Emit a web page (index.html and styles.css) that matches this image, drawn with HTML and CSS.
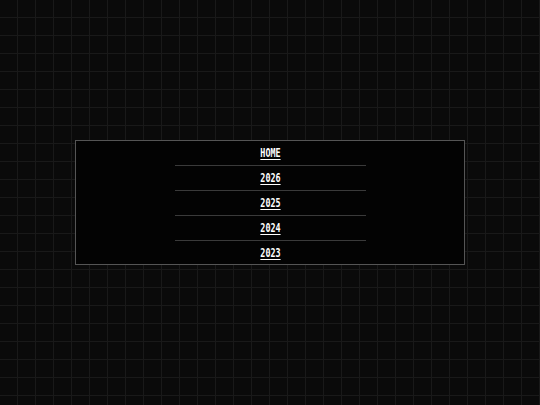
FILE: index.html
```html
<!DOCTYPE html>
<html lang="en">
<head>
<meta charset="utf-8">
<title>Archive</title>
<link rel="stylesheet" href="styles.css">
</head>
<body>
  <main class="stage">
    <nav class="panel">
      <ul class="menu">
        <li class="menu-item"><a class="menu-link" href="#">HOME</a></li>
        <li class="menu-item"><a class="menu-link" href="#">2026</a></li>
        <li class="menu-item"><a class="menu-link" href="#">2025</a></li>
        <li class="menu-item"><a class="menu-link" href="#">2024</a></li>
        <li class="menu-item"><a class="menu-link" href="#">2023</a></li>
      </ul>
    </nav>
  </main>
</body>
</html>
```
FILE: styles.css
```css
html, body {
  margin: 0;
  height: 100%;
}

body {
  background-color: #0a0a0a;
  background-image:
    linear-gradient(to right, #191919 1px, transparent 1px),
    linear-gradient(to bottom, #191919 1px, transparent 1px);
  background-size: 18px 18px;
  background-position: -1px -1px;
  font-family: "DejaVu Sans Mono", monospace;
}

.stage {
  height: 100%;
  display: flex;
  align-items: center;
  justify-content: center;
}

.panel {
  width: 388px;
  border: 1px solid #555;
  background: #030303;
  display: flex;
  justify-content: center;
}

.menu {
  list-style: none;
  margin: 0;
  padding: 0;
  width: 191px;
}

.menu-item {
  height: 24px;
  display: flex;
  align-items: center;
  justify-content: center;
  border-top: 1px solid #3a3a3a;
}

.menu-item:first-child {
  border-top: none;
}

.menu-item:last-child {
  height: 23px;
}

.menu-link {
  display: inline-block;
  color: #fff;
  font-size: 12px;
  font-weight: bold;
  text-decoration: underline;
  text-underline-offset: 2px;
  transform: scaleX(0.7);
}
```
